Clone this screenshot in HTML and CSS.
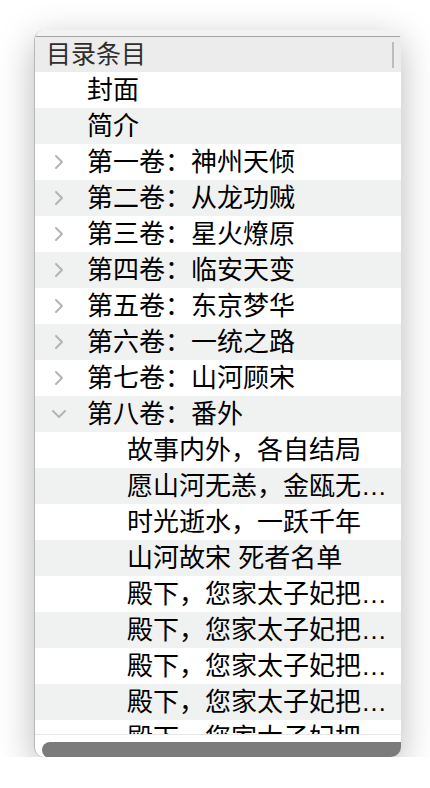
FILE: index.html
```html
<!DOCTYPE html>
<html lang="zh-CN">
<head>
  <meta charset="UTF-8" />
  <meta name="viewport" content="width=device-width, initial-scale=1.0"/>
  <title>目录</title>
  <link rel="stylesheet" href="styles.css">
</head>
<body>
  <div class="window">
    <div class="titlebar"></div>
    <div class="header">
      <span class="header-title">目录条目</span>
      <span class="header-divider"></span>
    </div>

    <div class="outline">
      <div class="row"><span class="toggle"></span><span class="label">封面</span></div>
      <div class="row"><span class="toggle"></span><span class="label">简介</span></div>
      <div class="row">
        <span class="toggle"><svg width="10" height="16" viewBox="0 0 10 16"><polyline points="2,2 8,8 2,14" /></svg></span>
        <span class="label">第一卷：神州天倾</span>
      </div>
      <div class="row">
        <span class="toggle"><svg width="10" height="16" viewBox="0 0 10 16"><polyline points="2,2 8,8 2,14" /></svg></span>
        <span class="label">第二卷：从龙功贼</span>
      </div>
      <div class="row">
        <span class="toggle"><svg width="10" height="16" viewBox="0 0 10 16"><polyline points="2,2 8,8 2,14" /></svg></span>
        <span class="label">第三卷：星火燎原</span>
      </div>
      <div class="row">
        <span class="toggle"><svg width="10" height="16" viewBox="0 0 10 16"><polyline points="2,2 8,8 2,14" /></svg></span>
        <span class="label">第四卷：临安天变</span>
      </div>
      <div class="row">
        <span class="toggle"><svg width="10" height="16" viewBox="0 0 10 16"><polyline points="2,2 8,8 2,14" /></svg></span>
        <span class="label">第五卷：东京梦华</span>
      </div>
      <div class="row">
        <span class="toggle"><svg width="10" height="16" viewBox="0 0 10 16"><polyline points="2,2 8,8 2,14" /></svg></span>
        <span class="label">第六卷：一统之路</span>
      </div>
      <div class="row">
        <span class="toggle"><svg width="10" height="16" viewBox="0 0 10 16"><polyline points="2,2 8,8 2,14" /></svg></span>
        <span class="label">第七卷：山河顾宋</span>
      </div>
      <div class="row">
        <span class="toggle"><svg width="16" height="10" viewBox="0 0 16 10"><polyline points="2,2 8,8 14,2" /></svg></span>
        <span class="label">第八卷：番外</span>
      </div>
      <div class="row child"><span class="toggle"></span><span class="label">故事内外，各自结局</span></div>
      <div class="row child"><span class="toggle"></span><span class="label">愿山河无恙，金瓯无缺（完）</span></div>
      <div class="row child"><span class="toggle"></span><span class="label">时光逝水，一跃千年</span></div>
      <div class="row child"><span class="toggle"></span><span class="label">山河故宋 死者名单</span></div>
      <div class="row child"><span class="toggle"></span><span class="label">殿下，您家太子妃把人打了（一）</span></div>
      <div class="row child"><span class="toggle"></span><span class="label">殿下，您家太子妃把人打了（二）</span></div>
      <div class="row child"><span class="toggle"></span><span class="label">殿下，您家太子妃把人打了（三）</span></div>
      <div class="row child"><span class="toggle"></span><span class="label">殿下，您家太子妃把人打了（四）</span></div>
      <div class="row child"><span class="toggle"></span><span class="label">殿下，您家太子妃把人打了（五）</span></div>
    </div>

    <div class="hscroll">
      <div class="hscroll-thumb"></div>
    </div>
  </div>
</body>
</html>
```

FILE: styles.css
```css
body {
  margin: 0;
  background: #ffffff;
  font-family: "Liberation Sans", "Noto Sans CJK SC", sans-serif;
}

.window {
  margin: 30px 30px 0 34px;
  width: 366px;
  height: 727px;
  display: flex;
  flex-direction: column;
  background: #ffffff;
  border-left: 1px solid #b8b8b8;
  border-radius: 10px;
  overflow: hidden;
  box-shadow: 0 10px 36px rgba(0, 0, 0, 0.28);
}

.titlebar {
  height: 6px;
  background: #f3f3f3;
  border-bottom: 1px solid #a3a3a3;
}

.header {
  height: 35px;
  flex-shrink: 0;
  display: flex;
  align-items: center;
  background: #ececec;
  padding-left: 11px;
}

.header-title {
  flex: 1;
  font-size: 25px;
  line-height: 35px;
  color: #2e2e2e;
}

.header-divider {
  width: 2px;
  height: 26px;
  margin-right: 7px;
  background: #bdbdbd;
}

.outline {
  flex: 1;
  overflow: hidden;
}

.row {
  height: 36px;
  display: flex;
  align-items: center;
  padding-left: 14px;
  padding-right: 12px;
  color: #000000;
}

.row:nth-child(even) {
  background: #f0f1f1;
}

.row.child {
  padding-left: 54px;
}

.toggle {
  width: 20px;
  height: 36px;
  margin-right: 18px;
  flex-shrink: 0;
  display: flex;
  align-items: center;
  justify-content: center;
}

.toggle polyline {
  fill: none;
  stroke: #b4b4b4;
  stroke-width: 2;
  stroke-linecap: round;
  stroke-linejoin: round;
}

.label {
  flex: 1;
  min-width: 0;
  font-size: 26px;
  line-height: 36px;
  white-space: nowrap;
  overflow: hidden;
  text-overflow: ellipsis;
}

.hscroll {
  height: 23px;
  flex-shrink: 0;
  border-top: 1px solid #e6e6e6;
  padding: 7px 0 0 7px;
  box-sizing: border-box;
}

.hscroll-thumb {
  height: 16px;
  background: #7b7b7b;
  border-radius: 8px 0 0 8px;
}
```
